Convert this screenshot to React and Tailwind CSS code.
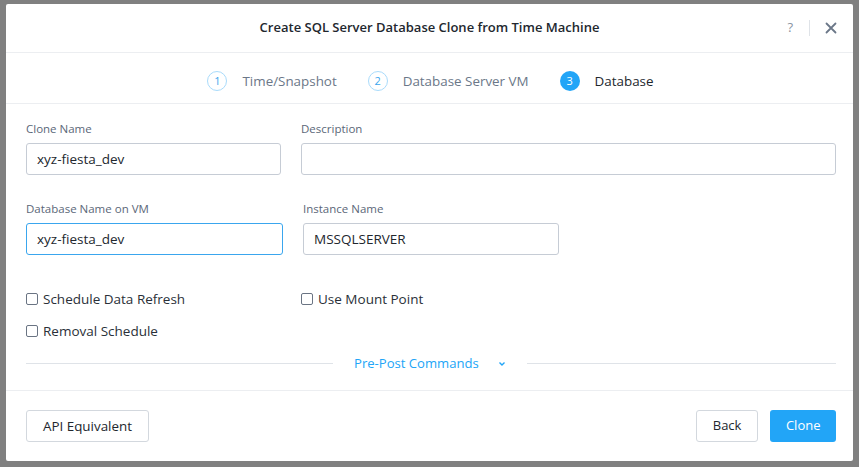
import React from "react";

function Field({ label, value, w, focused }) {
  return (
    <div className="flex flex-col">
      <div className="text-[11.5px] leading-[16px] text-[#5b6778]">{label}</div>
      <div
        className={`mt-[6px] h-[32px] ${w} rounded-[3px] border ${
          focused ? "border-[#3aa6ee]" : "border-[#c6ccd5]"
        } bg-white flex items-center px-[10px] text-[13.5px] text-[#22272e]`}
      >
        {value}
      </div>
    </div>
  );
}

function Check({ label }) {
  return (
    <div className="flex items-center gap-[5px] text-[13.5px] leading-[18px] text-[#2a3038]">
      <span className="w-[12px] h-[12px] rounded-[2px] border border-[#6a7483] bg-white" />
      <span>{label}</span>
    </div>
  );
}

function Step({ n, label, active }) {
  return (
    <div className="flex items-center gap-[15px]">
      <span
        className={`w-[20px] h-[20px] rounded-full flex items-center justify-center text-[11px] ${
          active ? "bg-[#22a5f7] text-white" : "border border-[#a9dbfb] text-[#3aa6ee]"
        }`}
      >
        {n}
      </span>
      <span className={`text-[13.4px] ${active ? "text-[#22272e]" : "text-[#6b7788]"}`}>{label}</span>
    </div>
  );
}

export default function App() {
  return (
    <div
      className="w-[859px] h-[467px] bg-[#808080] pt-[4px] pl-[6px] pr-[6px] pb-[6px]"
      style={{ fontFamily: '"Open Sans", sans-serif' }}
    >
      <div className="w-full h-full bg-white rounded-[2px] flex flex-col">
        {/* header */}
        <div className="h-[49px] border-b border-[#eceef1] flex items-center relative shrink-0">
          <div className="flex-1 text-center text-[13px] font-semibold text-[#22272e]">
            Create SQL Server Database Clone from Time Machine
          </div>
          <div className="absolute right-[16px] top-0 h-full flex items-center">
            <span className="text-[13px] text-[#8a94a2]">?</span>
            <span className="ml-[16px] mr-[15px] w-px h-[16px] bg-[#dfe3e8]" />
            <svg width="12" height="12" viewBox="0 0 12 12">
              <path d="M1.5 1.5L10.5 10.5M10.5 1.5L1.5 10.5" stroke="#6b7788" strokeWidth="1.8" strokeLinecap="round" />
            </svg>
          </div>
        </div>
        {/* steps */}
        <div className="h-[51px] border-b border-[#eceef1] flex items-center justify-center gap-[31px] shrink-0 pt-[7px] pl-[2px]">
          <Step n="1" label="Time/Snapshot" />
          <Step n="2" label="Database Server VM" />
          <Step n="3" label="Database" active />
        </div>
        {/* body */}
        <div className="flex-1 pl-[20px] pr-[17px] pt-[17px]">
          <div className="flex gap-[20px]">
            <Field label="Clone Name" value="xyz-fiesta_dev" w="w-[255px]" />
            <div className="flex-1">
              <Field label="Description" value="" w="w-full" />
            </div>
          </div>
          <div className="flex gap-[20px] mt-[26px]">
            <Field label="Database Name on VM" value="xyz-fiesta_dev" w="w-[257px]" focused />
            <Field label="Instance Name" value="MSSQLSERVER" w="w-[256px]" />
          </div>
          <div className="mt-[35px] flex">
            <div className="w-[275px] flex flex-col gap-[14px]">
              <Check label="Schedule Data Refresh" />
              <Check label="Removal Schedule" />
            </div>
            <div>
              <Check label="Use Mount Point" />
            </div>
          </div>
          <div className="mt-[14px] flex items-center">
            <div className="w-[307px] h-px bg-[#dfe3e8]" />
            <div className="flex items-center pl-[21px] pr-[21px] gap-[19px] text-[13.1px] text-[#22a5f7]">
              <span>Pre-Post Commands</span>
              <svg width="8" height="6" viewBox="0 0 8 6">
                <path d="M1.5 1.5L4 4L6.5 1.5" stroke="#22a5f7" strokeWidth="1.4" fill="none" />
              </svg>
            </div>
            <div className="flex-1 h-px bg-[#dfe3e8]" />
          </div>
        </div>
        {/* footer */}
        <div className="h-[71px] border-t border-[#eceef1] flex items-center justify-between pl-[20px] pr-[17px] shrink-0">
          <button className="h-[32px] px-[16px] rounded-[3px] border border-[#d3d8de] bg-white text-[13.4px] text-[#22272e]">
            API Equivalent
          </button>
          <div className="flex gap-[12px]">
            <button className="h-[32px] px-[16px] rounded-[3px] border border-[#d3d8de] bg-white text-[13px] text-[#22272e]">
              Back
            </button>
            <button className="h-[32px] px-[15.5px] rounded-[3px] bg-[#22a5f7] text-[13px] text-white">
              Clone
            </button>
          </div>
        </div>
      </div>
    </div>
  );
}
